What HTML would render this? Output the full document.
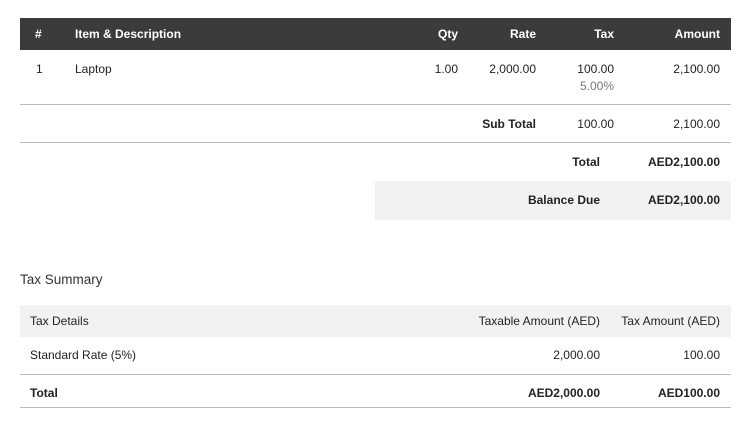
<!DOCTYPE html>
<html><head><meta charset="utf-8"><style>
body{margin:0;width:745px;height:427px;background:#fff;font-family:"Liberation Sans",sans-serif;font-size:12px;color:#222;position:relative;overflow:hidden}
.a{position:absolute;white-space:nowrap;line-height:14px}
.r{text-align:right}
.b{font-weight:bold}
.w{color:#fff}
.line{position:absolute;height:1px;background:#bdbdbd}
</style></head><body>
<div style="position:absolute;left:20px;top:18px;width:711px;height:32px;background:#3c3b39"></div>
<div class="a w b" style="left:35px;top:27px">#</div>
<div class="a w b" style="left:75px;top:27px">Item &amp; Description</div>
<div class="a w b r" style="right:287px;top:27px">Qty</div>
<div class="a w b r" style="right:209px;top:27px">Rate</div>
<div class="a w b r" style="right:131px;top:27px">Tax</div>
<div class="a w b r" style="right:25px;top:27px">Amount</div>

<div class="a" style="left:36px;top:62px">1</div>
<div class="a" style="left:75px;top:62px">Laptop</div>
<div class="a r" style="right:287px;top:62px">1.00</div>
<div class="a r" style="right:209px;top:62px">2,000.00</div>
<div class="a r" style="right:131px;top:62px">100.00</div>
<div class="a r" style="right:131px;top:79px;color:#777">5.00%</div>
<div class="a r" style="right:25px;top:62px">2,100.00</div>
<div class="line" style="left:20px;width:711px;top:104px"></div>

<div class="a b r" style="right:209px;top:117px">Sub Total</div>
<div class="a r" style="right:131px;top:117px">100.00</div>
<div class="a r" style="right:25px;top:117px">2,100.00</div>
<div class="line" style="left:20px;width:711px;top:142px"></div>

<div class="a b r" style="right:145px;top:155px">Total</div>
<div class="a b r" style="right:25px;top:155px">AED2,100.00</div>
<div style="position:absolute;left:375px;top:181px;width:356px;height:39px;background:#f3f2f0"></div>
<div class="a b r" style="right:145px;top:193px">Balance Due</div>
<div class="a b r" style="right:25px;top:193px">AED2,100.00</div>

<div class="a" style="left:20px;top:272px;font-size:13.5px;color:#333;line-height:16px">Tax Summary</div>
<div style="position:absolute;left:20px;top:305px;width:711px;height:32px;background:#f3f2f0"></div>
<div class="a" style="left:30px;top:314px">Tax Details</div>
<div class="a r" style="right:145px;top:314px">Taxable Amount (AED)</div>
<div class="a r" style="right:25px;top:314px">Tax Amount (AED)</div>
<div class="a" style="left:30px;top:348px">Standard Rate (5%)</div>
<div class="a r" style="right:145px;top:348px">2,000.00</div>
<div class="a r" style="right:25px;top:348px">100.00</div>
<div class="line" style="left:20px;width:711px;top:374px"></div>
<div class="a b" style="left:30px;top:386px">Total</div>
<div class="a b r" style="right:145px;top:386px">AED2,000.00</div>
<div class="a b r" style="right:25px;top:386px">AED100.00</div>
<div class="line" style="left:20px;width:711px;top:407px"></div>
</body></html>
